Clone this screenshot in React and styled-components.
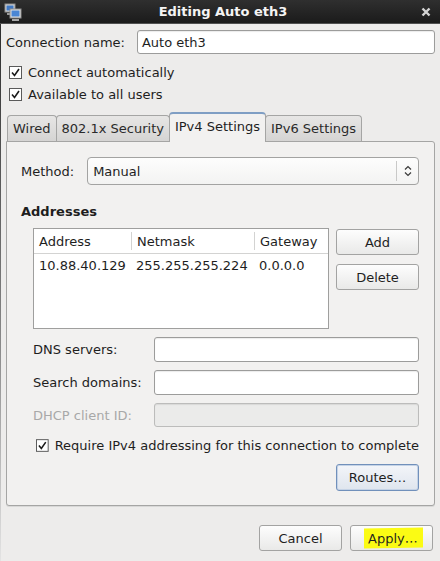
import React from 'react'
import styled, { createGlobalStyle } from 'styled-components'

const Global = createGlobalStyle`
  html, body { margin: 0; padding: 0; background: #edeceb; }
  body { font-family: "DejaVu Sans", Verdana, sans-serif; font-size: 13px; color: #1e1e1e; }
  * { box-sizing: border-box; }
`

const Window = styled.div`
  width: 440px;
  height: 561px;
  display: flex;
  flex-direction: column;
  background: #edeceb;
  overflow: hidden;
`

const TitleBar = styled.div`
  height: 24px;
  flex: none;
  display: flex;
  align-items: center;
  padding: 0 8px 0 4px;
  background: linear-gradient(#2f2f2f, #1b1b1b);
  border-bottom: 1px solid #505050;
`

const Title = styled.div`
  flex: 1;
  text-align: center;
  color: #f4f4f4;
  font-weight: bold;
  font-size: 13px;
  padding-left: 4px;
`

const Close = styled.div`
  width: 12px;
  display: flex;
  justify-content: center;
`

const Body = styled.div`
  flex: 1;
  display: flex;
  flex-direction: column;
  padding: 6px 5px 0 5px;
  border-left: 1px solid transparent;
  border-image: linear-gradient(#2c2c2c, #8a8a8a 60%, #e4e4e4) 1;
`

const NameRow = styled.div`
  display: flex;
  align-items: center;
  height: 24px;
  gap: 12px;
`

const Label = styled.span`
  color: ${p => (p.$disabled ? '#a8a8a8' : '#1e1e1e')};
  white-space: nowrap;
`

const Input = styled.div`
  height: ${p => p.$h || 24}px;
  flex: 1;
  display: flex;
  align-items: center;
  padding: 0 4px;
  background: ${p => (p.$disabled ? '#ebebea' : '#ffffff')};
  border: 1px solid ${p => (p.$disabled ? '#bcbcbb' : '#9c9c9b')};
  border-radius: 3px;
  box-shadow: inset 0 1px 1px rgba(0, 0, 0, 0.08);
`

const CheckRow = styled.label`
  display: flex;
  align-items: center;
  gap: 6px;
  height: 22px;
  white-space: nowrap;
  padding-left: ${p => p.$indent || 3}px;
  margin-top: ${p => p.$top || 0}px;
`

const Notebook = styled.div`
  margin-top: 7px;
  display: flex;
  flex-direction: column;
`

const TabRow = styled.div`
  display: flex;
  align-items: flex-end;
  padding-left: 1px;
  height: 29px;
  position: relative;
  z-index: 1;
`

const Tab = styled.div`
  height: ${p => (p.$active ? 30 : 26)}px;
  padding: 0 5px;
  display: flex;
  align-items: center;
  padding-bottom: ${p => (p.$active ? 3 : 0)}px;
  border: 1px solid #a5a5a4;
  border-bottom: none;
  border-top-color: ${p => (p.$active ? '#7f9ec4' : '#a5a5a4')};
  border-top-width: ${p => (p.$active ? 2 : 1)}px;
  border-radius: 4px 4px 0 0;
  margin-right: -1px;
  background: ${p => (p.$active ? '#f2f1f0' : 'linear-gradient(#e7e6e5, #d5d4d3)')};
  color: ${p => (p.$active ? '#1e1e1e' : '#2a2a2a')};
  margin-bottom: ${p => (p.$active ? -1 : 0)}px;
`

const Panel = styled.div`
  width: 429px;
  height: 365px;
  background: #f2f1f0;
  border: 1px solid #a5a5a4;
  border-radius: 0 3px 3px 3px;
  padding: 15px 15px 0 14px;
  display: flex;
  flex-direction: column;
  box-shadow: 0 1px 0 #d8d8d7;
`

const MethodRow = styled.div`
  display: flex;
  align-items: center;
  gap: 13px;
  height: 28px;
`

const Combo = styled.div`
  flex: 1;
  height: 28px;
  display: flex;
  align-items: center;
  border: 1px solid #a3a3a2;
  border-radius: 4px;
  background: linear-gradient(#fdfdfd, #f3f3f2);
  padding-left: 5px;
`

const ComboText = styled.span`
  flex: 1;
`

const ComboArrow = styled.div`
  width: 22px;
  height: 20px;
  border-left: 1px solid #c9c9c8;
  display: flex;
  align-items: center;
  justify-content: center;
`

const Heading = styled.div`
  font-weight: bold;
  margin-top: 19px;
  height: 16px;
  line-height: 16px;
`

const AddrRow = styled.div`
  display: flex;
  gap: 7px;
  margin-top: 8px;
  padding-left: 12px;
`

const List = styled.div`
  width: 296px;
  height: 101px;
  background: #fff;
  border: 1px solid #9f9f9e;
`

const ListHead = styled.div`
  display: grid;
  grid-template-columns: 97px 123px 1fr;
  height: 25px;
  border-bottom: 1px solid #d3d3d2;
`

const HeadCell = styled.div`
  display: flex;
  align-items: center;
  padding-left: 5px;
  border-left: ${p => (p.$first ? 'none' : '1px solid #d3d3d2')};
  margin: 3px 0;
`

const ListRow = styled.div`
  display: grid;
  grid-template-columns: 97px 123px 1fr;
  height: 22px;
  align-items: center;
  padding-top: 1px;
`

const Cell = styled.div`
  padding-left: 5px;
  white-space: nowrap;
`

const SideButtons = styled.div`
  display: flex;
  flex-direction: column;
  gap: 9px;
  padding-top: 1px;
`

const Button = styled.div`
  width: 83px;
  height: ${p => p.$h || 26}px;
  display: flex;
  align-items: center;
  justify-content: center;
  border: 1px solid ${p => (p.$focus ? '#7190bb' : '#a3a3a2')};
  border-radius: 3px;
  background: ${p => (p.$focus ? 'linear-gradient(#f3f5f9, #dfe5ee)' : 'linear-gradient(#fdfdfd, #e9e9e8)')};
  box-shadow: ${p => (p.$focus ? 'inset 0 0 0 1px #c5d3e6' : 'none')};
  color: #1e1e1e;
`

const FieldGrid = styled.div`
  display: grid;
  grid-template-columns: 121px 1fr;
  row-gap: 8px;
  margin-top: 8px;
  padding-left: 12px;
  align-items: center;
`

const RoutesRow = styled.div`
  display: flex;
  justify-content: flex-end;
  margin-top: 8px;
`

const ButtonBar = styled.div`
  display: flex;
  justify-content: flex-end;
  gap: 8px;
  margin-top: 19px;
  padding-right: 2px;
`

const Marker = styled.span`
  background: #fbfb14;
  padding: 3px 5px 2px 4px;
  margin-left: 3px;
  transform: skewY(-1deg);
  display: inline-block;
`

function Checkbox() {
  return (
    <svg width="13" height="13" viewBox="0 0 13 13">
      <rect x="0.5" y="0.5" width="12" height="12" fill="#fff" stroke="#5a5a5a" />
      <path d="M3 6.5 L5.5 9.5 L10 3" fill="none" stroke="#1a1a1a" strokeWidth="1.6" />
    </svg>
  )
}

function NetIcon() {
  return (
    <svg width="18" height="18" viewBox="0 0 18 18">
      <rect x="1" y="1" width="10" height="8" fill="#d6d6d6" stroke="#8c8c8c" />
      <rect x="2.5" y="2.5" width="7" height="5" fill="#3f78c4" />
      <rect x="3" y="10" width="6" height="2" fill="#9a9a9a" />
      <rect x="6" y="6" width="11" height="9" fill="#e2e2e2" stroke="#8c8c8c" />
      <rect x="7.5" y="7.5" width="8" height="6" fill="#4a86d4" />
      <rect x="8" y="16" width="7" height="2" fill="#a8a8a8" />
    </svg>
  )
}

function CloseIcon() {
  return (
    <svg width="10" height="10" viewBox="0 0 10 10">
      <path d="M1.5 1.5 L8.5 8.5 M8.5 1.5 L1.5 8.5" stroke="#d4d4d4" strokeWidth="2.4" />
    </svg>
  )
}

function UpDown() {
  return (
    <svg width="8" height="12" viewBox="0 0 8 12">
      <path d="M1 4.5 L4 1.5 L7 4.5 M1 7.5 L4 10.5 L7 7.5" fill="none" stroke="#3a3a3a" strokeWidth="1.2" />
    </svg>
  )
}

const tabs = ['Wired', '802.1x Security', 'IPv4 Settings', 'IPv6 Settings']

export default function App() {
  return (
    <Window>
      <Global />
      <TitleBar>
        <NetIcon />
        <Title>Editing Auto eth3</Title>
        <Close><CloseIcon /></Close>
      </TitleBar>
      <Body>
        <NameRow>
          <Label>Connection name:</Label>
          <Input>Auto eth3</Input>
        </NameRow>
        <CheckRow $top={7}><Checkbox />Connect automatically</CheckRow>
        <CheckRow><Checkbox />Available to all users</CheckRow>

        <Notebook>
          <TabRow>
            {tabs.map(t => (
              <Tab key={t} $active={t === 'IPv4 Settings'}>{t}</Tab>
            ))}
          </TabRow>
          <Panel>
            <MethodRow>
              <Label>Method:</Label>
              <Combo>
                <ComboText>Manual</ComboText>
                <ComboArrow><UpDown /></ComboArrow>
              </Combo>
            </MethodRow>

            <Heading>Addresses</Heading>
            <AddrRow>
              <List>
                <ListHead>
                  <HeadCell $first>Address</HeadCell>
                  <HeadCell>Netmask</HeadCell>
                  <HeadCell>Gateway</HeadCell>
                </ListHead>
                <ListRow>
                  <Cell>10.88.40.129</Cell>
                  <Cell>255.255.255.224</Cell>
                  <Cell>0.0.0.0</Cell>
                </ListRow>
              </List>
              <SideButtons>
                <Button>Add</Button>
                <Button>Delete</Button>
              </SideButtons>
            </AddrRow>

            <FieldGrid>
              <Label>DNS servers:</Label>
              <Input $h={25} />
              <Label>Search domains:</Label>
              <Input $h={25} />
              <Label $disabled>DHCP client ID:</Label>
              <Input $h={24} $disabled />
            </FieldGrid>

            <CheckRow $indent={15} $top={7}>
              <Checkbox />Require IPv4 addressing for this connection to complete
            </CheckRow>

            <RoutesRow>
              <Button $focus $h={27}>Routes…</Button>
            </RoutesRow>
          </Panel>
        </Notebook>

        <ButtonBar>
          <Button>Cancel</Button>
          <Button><Marker>Apply…</Marker></Button>
        </ButtonBar>
      </Body>
    </Window>
  )
}
